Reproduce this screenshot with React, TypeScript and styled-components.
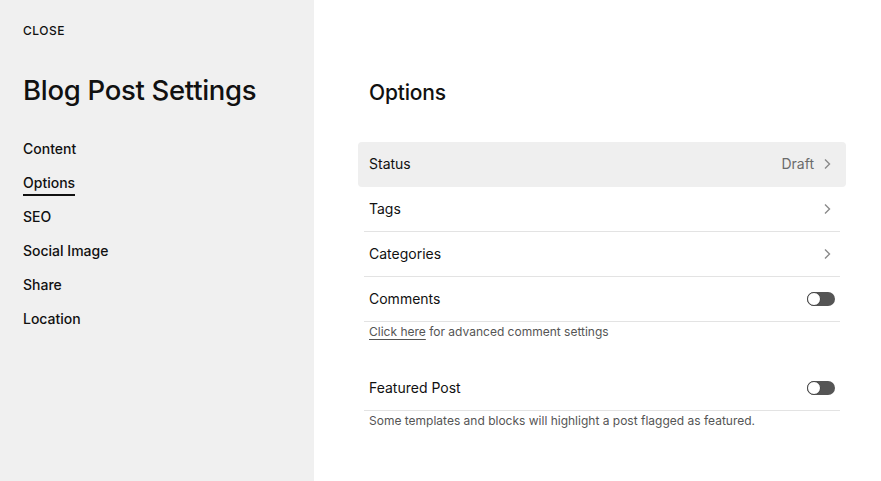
import styled, { createGlobalStyle } from 'styled-components';

const GlobalStyle = createGlobalStyle`
  html, body {
    margin: 0;
    padding: 0;
    background: #fff;
  }
  body {
    font-family: Inter, 'Noto Sans', sans-serif;
    color: #111;
    -webkit-font-smoothing: antialiased;
  }
`;

const Page = styled.div`
  display: flex;
  width: 881px;
  height: 481px;
  overflow: hidden;
`;

const Sidebar = styled.aside`
  width: 314px;
  flex-shrink: 0;
  background: #f0f0f0;
  padding: 23px 0 0 23px;
  box-sizing: border-box;
`;

const CloseButton = styled.div`
  font-size: 12px;
  font-weight: 500;
  letter-spacing: 0.5px;
  line-height: 15px;
`;

const Title = styled.h1`
  margin: 36px 0 0;
  font-size: 27.5px;
  font-weight: 500;
  letter-spacing: -0.3px;
  line-height: 32px;
`;

const Nav = styled.nav`
  margin-top: 33px;
  display: flex;
  flex-direction: column;
  align-items: flex-start;
  gap: 14px;
`;

const NavItem = styled.div<{ $active?: boolean }>`
  font-size: 14px;
  font-weight: 500;
  line-height: 20px;
  position: relative;
  &::after {
    content: '';
    display: ${(p) => (p.$active ? 'block' : 'none')};
    position: absolute;
    left: 0;
    right: 0;
    bottom: -3px;
    height: 2px;
    background: #111;
  }
`;

const Main = styled.main`
  flex: 1;
  padding: 78px 0 0 50px;
`;

const Heading = styled.h2`
  margin: 0 0 35px 5px;
  font-size: 21px;
  font-weight: 500;
  line-height: 29px;
  letter-spacing: -0.2px;
`;

const List = styled.div`
  width: 476px;
  display: flex;
  flex-direction: column;
`;

const Row = styled.div<{ $highlight?: boolean; $divider?: boolean }>`
  height: 45px;
  display: flex;
  align-items: center;
  justify-content: space-between;
  box-sizing: border-box;
  padding: 0 5px;
  font-size: 14px;
  line-height: 20px;
  border-bottom: 1px solid ${(p) => (p.$divider ? '#e3e3e3' : 'transparent')};
  ${(p) =>
    p.$highlight &&
    `
    background: #efefef;
    border-radius: 4px;
    margin: 0 -6px;
    padding: 0 11px;
  `}
`;

const Chevroned = styled.div`
  display: flex;
  align-items: center;
  gap: 8px;
  color: #6b6b6b;
  margin-right: 3px;
`;

const Chevron = () => (
  <svg width="10" height="12" viewBox="0 0 10 12">
    <path d="M3 1.5 L7.5 6 L3 10.5" fill="none" stroke="#8a8a8a" strokeWidth="1.4" />
  </svg>
);

const Toggle = styled.div`
  width: 28px;
  height: 14px;
  border-radius: 7px;
  background: #555;
  position: relative;
  &::before {
    content: '';
    position: absolute;
    left: 0;
    top: 0;
    width: 12px;
    height: 12px;
    border-radius: 50%;
    background: #fff;
    border: 1px solid #444;
  }
`;

const Note = styled.p`
  margin: 0;
  padding: 2px 5px 0;
  font-size: 12px;
  line-height: 16px;
  color: #555;
`;

const NoteLink = styled.span`
  text-decoration: underline;
  text-underline-offset: 3px;
  text-decoration-color: #555;
`;

const Spacer = styled.div`
  height: 26px;
`;

export default function App() {
  const nav = ['Content', 'Options', 'SEO', 'Social Image', 'Share', 'Location'];
  return (
    <Page>
      <GlobalStyle />
      <Sidebar>
        <CloseButton>CLOSE</CloseButton>
        <Title>Blog Post Settings</Title>
        <Nav>
          {nav.map((n) => (
            <NavItem key={n} $active={n === 'Options'}>
              {n}
            </NavItem>
          ))}
        </Nav>
      </Sidebar>
      <Main>
        <Heading>Options</Heading>
        <List>
          <Row $highlight>
            <span>Status</span>
            <Chevroned>
              Draft
              <Chevron />
            </Chevroned>
          </Row>
          <Row $divider>
            <span>Tags</span>
            <Chevroned>
              <Chevron />
            </Chevroned>
          </Row>
          <Row $divider>
            <span>Categories</span>
            <Chevroned>
              <Chevron />
            </Chevroned>
          </Row>
          <Row $divider>
            <span>Comments</span>
            <Toggle />
          </Row>
          <Note>
            <NoteLink>Click here</NoteLink> for advanced comment settings
          </Note>
          <Spacer />
          <Row $divider>
            <span>Featured Post</span>
            <Toggle />
          </Row>
          <Note>Some templates and blocks will highlight a post flagged as featured.</Note>
        </List>
      </Main>
    </Page>
  );
}
